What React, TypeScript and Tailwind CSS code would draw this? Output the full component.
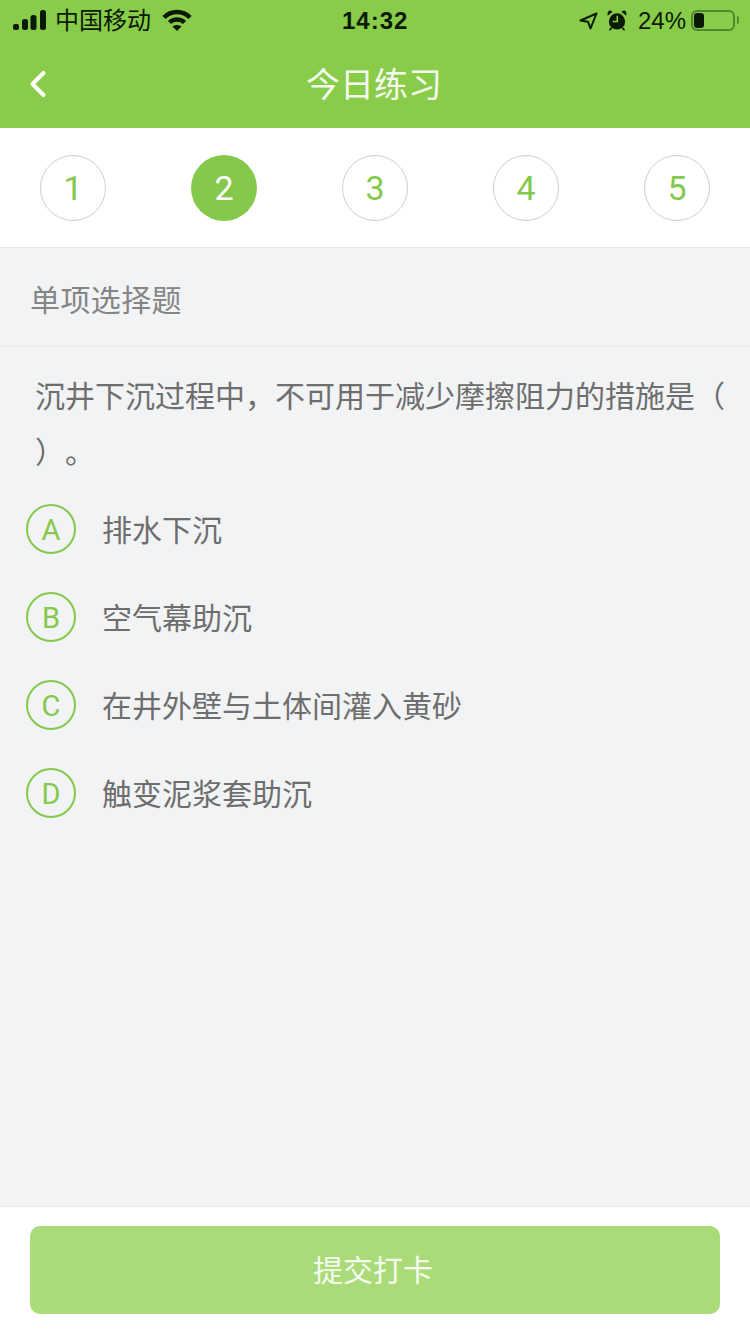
import { ChevronLeft } from "lucide-react";

const CJK = "font-['Liberation_Sans','Noto_Sans_CJK_SC',sans-serif]";

const steps = [1, 2, 3, 4, 5];

const options = [
  { key: "A", label: "排水下沉" },
  { key: "B", label: "空气幕助沉" },
  { key: "C", label: "在井外壁与土体间灌入黄砂" },
  { key: "D", label: "触变泥浆套助沉" },
];

function StatusBar() {
  return (
    <div className="relative flex h-[40px] items-center justify-between pl-[13px] pr-[11px] text-[#0b1a05]">
      <div className="flex items-center">
        {/* Signal */}
        <svg width="33" height="20" viewBox="0 0 33 20" fill="currentColor">
          <rect x="0" y="14" width="6" height="6" rx="2" />
          <rect x="9" y="9" width="6" height="11" rx="2.500" />
          <rect x="17.500" y="5" width="6" height="15" rx="2.500" />
          <rect x="27" y="0" width="6" height="20" rx="2.500" />
        </svg>
        <span className="ml-[9px] mt-[2px] text-[24px] leading-none">中国移动</span>
        {/* Wifi */}
        <svg className="ml-[11px]" width="30" height="22" viewBox="0 0 30 22">
          <g fill="none" stroke="currentColor" strokeWidth="4.500">
            <path d="M2 8.500C9 1 21 1 28 8.500" />
            <path d="M7.500 13.500C11.500 9.500 18.500 9.500 22.500 13.500" />
          </g>
          <path d="M10.500 17.500C13 15.500 17 15.500 19.500 17.500L15 22z" fill="currentColor" />
        </svg>
      </div>
      <span className="absolute left-[342px] top-[7px] text-[24px] font-bold leading-[28px] tracking-[1px]">14:32</span>
      <div className="flex items-center">
        {/* Location arrow */}
        <svg width="19" height="18" viewBox="0 0 19 18" className="mt-[2px]" fill="none" stroke="currentColor" strokeWidth="2" strokeLinejoin="round">
          <path d="M17.500 1.500 1.500 8.500l7.500 1.200L11.500 16.500z" />
        </svg>
        {/* Alarm */}
        <svg className="ml-[9px]" width="20" height="21" viewBox="0 0 21 22" fill="currentColor">
          <circle cx="10.500" cy="12" r="8.500" />
          <path d="M.8 6 6 1.800 3.500 .5C1.500 .5 0 2.500.8 6z" />
          <path d="M20.200 6 15 1.800l2.500-1.300C19.500 .5 21 2.500 20.200 6z" />
          <path d="M4 18l-2 3 1.200.8L5.500 19.500zM17 18l2 3-1.200.8-2.300-2.300z" />
          <path d="M10 6h1.600v6.800H6v-1.600h4z" fill="#88cc4a" />
        </svg>
        <span className="ml-[11px] mt-[2px] text-[24px] leading-none">24%</span>
        {/* Battery */}
        <div className="ml-[5px] flex items-center">
          <div className="flex h-[21px] w-[44px] items-center rounded-[6px] border-2 border-[#4f8a2c] p-[1px]">
            <div className="h-full w-[10px] rounded-[3px] bg-[#0b1a05]" />
          </div>
          <div className="ml-[2px] h-[8px] w-[2px] rounded-r-full bg-[#4f8a2c]" />
        </div>
      </div>
    </div>
  );
}

export default function App() {
  return (
    <div className={`flex h-[1334px] w-[750px] flex-col overflow-hidden bg-[#f2f3f5] ${CJK}`}>
      {/* Header */}
      <div className="h-[128px] bg-[#88cc4a]">
        <StatusBar />
        <div className="relative flex h-[88px] items-center justify-center">
          <ChevronLeft className="absolute left-[16px] top-[22px] text-white" size={44} strokeWidth={2.200} />
          <span className="pr-[2px] pt-[1px] text-[34px] leading-none text-[#f6fbf0]">今日练习</span>
        </div>
      </div>

      {/* Steps */}
      <div className="flex h-[120px] items-start justify-between border-b border-[#e6e6e6] bg-white px-[40px] pt-[27px] font-['Roboto',sans-serif]">
        {steps.map((n) =>
          n === 2 ? (
            <div key={n} className="flex h-[66px] w-[66px] items-center justify-center rounded-full bg-[#84c94c] text-[34px] text-white">
              {n}
            </div>
          ) : (
            <div key={n} className="flex h-[66px] w-[66px] items-center justify-center rounded-full border border-[#cfcfcf] text-[34px] text-[#84c94c]">
              {n}
            </div>
          ),
        )}
      </div>

      {/* Question type */}
      <div className="flex h-[99px] items-center border-b border-[#e6e7e9] pl-[30px] pt-[8px] text-[30px] leading-none tracking-[0.4px] text-[#858585]">
        单项选择题
      </div>

      {/* Question */}
      <p className="mt-[22px] pl-[35px] pr-[20px] text-[30px] leading-[56px] text-[#6e6e6e] [text-spacing-trim:space-all]">
        沉井下沉过程中，不可用于减少摩擦阻力的措施是（ ）。
      </p>

      {/* Options */}
      <div className="mt-[23px] flex flex-col gap-[38px] pl-[26px]">
        {options.map((o) => (
          <div key={o.key} className="flex items-center">
            <div className="flex h-[50px] w-[50px] items-center justify-center rounded-full border-2 border-[#84c94c] pt-[3px] font-['Roboto',sans-serif] text-[29px] text-[#84c94c]">
              {o.key}
            </div>
            <span className="ml-[26px] pt-[3px] text-[30px] leading-none text-[#6e6e6e]">{o.label}</span>
          </div>
        ))}
      </div>

      {/* Submit */}
      <div className="mt-auto h-[128px] border-t border-[#e8e8e8] bg-white px-[30px] pt-[19px]">
        <button type="button" className="flex h-[88px] w-full items-center justify-center rounded-[10px] bg-[#a9dc78] pr-[4px] text-[30px] text-[#f6fbf0]">
          提交打卡
        </button>
      </div>
    </div>
  );
}
